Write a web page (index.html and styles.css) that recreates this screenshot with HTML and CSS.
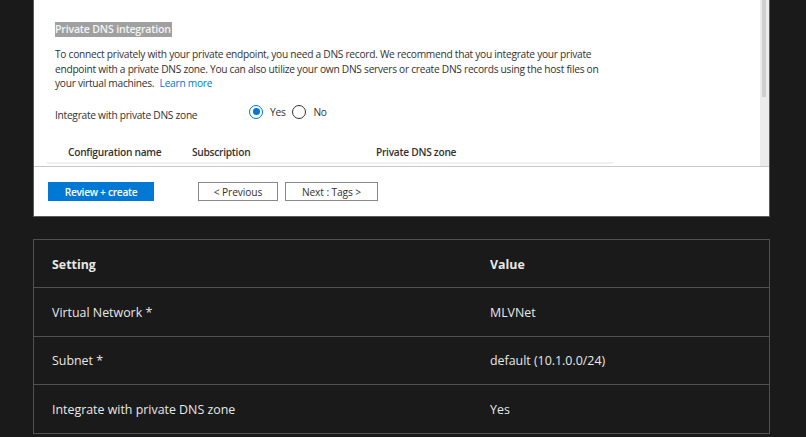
FILE: index.html
```html
<!DOCTYPE html>
<html>
<head>
<meta charset="utf-8">
<link rel="stylesheet" href="styles.css">
</head>
<body>
<div class="page">
  <div class="panel">
    <div class="scroll">
      <div class="content">
        <div class="heading"><span class="sel">Private DNS integration</span></div>
        <p class="desc">To connect privately with your private endpoint, you need a DNS record. We recommend that you integrate your private<br>endpoint with a private DNS zone. You can also utilize your own DNS servers or create DNS records using the host files on<br>your virtual machines. <a class="link">Learn more</a></p>
        <div class="field">
          <span class="label">Integrate with private DNS zone</span>
          <div class="radios">
            <span class="radio checked"></span><span class="rtext">Yes</span>
            <span class="radio"></span><span class="rtext">No</span>
          </div>
        </div>
        <div class="cfg">
          <span class="c1">Configuration name</span>
          <span class="c2">Subscription</span>
          <span class="c3">Private DNS zone</span>
        </div>
      </div>
      <div class="scrollbar"><div class="thumb"></div></div>
    </div>
    <div class="footer">
      <button class="btn primary">Review + create</button>
      <button class="btn sec prev">&lt; Previous</button>
      <button class="btn sec next">Next : Tags &gt;</button>
    </div>
  </div>

  <div class="table">
    <div class="row head"><span class="k">Setting</span><span class="v">Value</span></div>
    <div class="row"><span class="k">Virtual Network *</span><span class="v">MLVNet</span></div>
    <div class="row"><span class="k">Subnet *</span><span class="v">default (10.1.0.0/24)</span></div>
    <div class="row"><span class="k">Integrate with private DNS zone</span><span class="v">Yes</span></div>
  </div>
</div>
</body>
</html>
```

FILE: styles.css
```css
html, body {
  margin: 0;
  padding: 0;
  background: #1a1a1a;
}
.page {
  padding-left: 33px;
  width: 737px;
  font-family: "Open Sans", "Noto Sans", sans-serif;
}
.panel {
  background: #fff;
  border: 1px solid #5a5a5a;
  border-top: none;
  height: 216px;
  display: flex;
  flex-direction: column;
}
.scroll {
  display: flex;
  border-bottom: 1px solid #c8c8c8;
  box-sizing: border-box;
  height: 167px;
}
.content {
  flex: 1;
  padding-left: 21px;
  color: #323130;
  font-size: 10.2px;
  letter-spacing: -0.27px;
}
.heading {
  margin-top: 23px;
  height: 15px;
}
.sel {
  background: #a0a0a0;
  color: #f4f4f4;
  font-weight: 600;
  font-size: 10.6px;
  line-height: 15px;
  display: inline-block;
  padding-right: 1px;
  letter-spacing: -0.2px;
  position: relative;
  top: -1px;
}
.desc {
  margin: 9px 0 0 0;
  line-height: 14.6px;
}
.link {
  color: #0078d4;
  margin-left: 3px;
}
.field {
  display: flex;
  align-items: center;
  margin-top: 13px;
  height: 16px;
}
.label {
  width: 194px;
  margin-top: 6px;
}
.radios {
  display: flex;
  align-items: center;
}
.radio {
  width: 12px;
  height: 12px;
  border: 1px solid #323130;
  border-radius: 50%;
  box-sizing: content-box;
  position: relative;
}
.radio.checked {
  border-color: #0078d4;
}
.radio.checked::after {
  content: "";
  position: absolute;
  left: 2.5px;
  top: 2.5px;
  width: 7px;
  height: 7px;
  border-radius: 50%;
  background: #0078d4;
}
.rtext {
  margin-left: 7px;
  margin-right: 7px;
}
.cfg {
  display: flex;
  align-items: center;
  margin-top: 22px;
  margin-left: -8px;
  width: 566px;
  padding-left: 21px;
  box-sizing: border-box;
  height: 22px;
  border-bottom: 2px solid #f0f0f0;
  font-weight: 600;
}
.c1 { width: 124px; }
.c2 { width: 184px; }
.scrollbar {
  width: 9px;
  background: #ececec;
  padding-left: 2px;
  box-sizing: border-box;
}
.thumb {
  width: 4px;
  height: 97px;
  background: #d0d0d0;
}
.footer {
  display: flex;
  align-items: flex-start;
  padding: 15px 0 0 14px;
}
.btn {
  font-family: inherit;
  font-size: 10.2px;
  height: 19px;
  padding: 0;
  border-radius: 0;
  margin: 0;
  letter-spacing: -0.1px;
}
.primary {
  background: #0078d4;
  color: #fff;
  border: 1px solid #0078d4;
  width: 106px;
  font-weight: 600;
  letter-spacing: -0.3px;
}
.sec {
  background: #fff;
  color: #323130;
  border: 1px solid #8a8886;
}
.prev {
  margin-left: 44px;
  width: 80px;
  margin-right: 7px;
}
.next { width: 93px; }
.table {
  margin-top: 22px;
  border: 1px solid #505050;
  color: #e8e8e8;
  font-size: 12.4px;
}
.row {
  display: flex;
  align-items: center;
  border-top: 1px solid #505050;
  padding-left: 18px;
  padding-top: 1px;
  box-sizing: border-box;
  height: 48.5px;
}
.row.head {
  border-top: none;
  height: 47px;
  font-weight: 700;
}
.k { width: 438px; }
```
